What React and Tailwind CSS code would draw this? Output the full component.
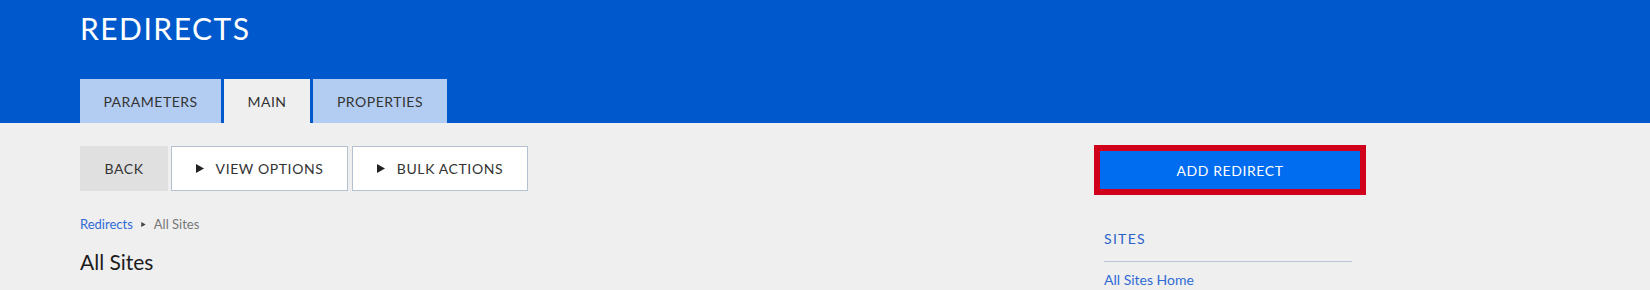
import React from "react";

const TABS = [
  { label: "PARAMETERS", width: "w-[141px]", active: false },
  { label: "MAIN", width: "w-[86px]", active: true },
  { label: "PROPERTIES", width: "w-[134px]", active: false },
];

function Caret({ className }) {
  return (
    <svg className={className} viewBox="0 0 8 9" aria-hidden="true">
      <polygon points="0,0 8,4.5 0,9" fill="currentColor" />
    </svg>
  );
}

function Header() {
  return (
    <header className="h-[123px] bg-[#0059cc] px-[80px]">
      <h1 className="pt-[13px] text-[30px] leading-none tracking-[1.5px] text-white">REDIRECTS</h1>
      <nav className="mt-[36px] flex gap-[3px]">
        {TABS.map((tab) => (
          <div
            key={tab.label}
            className={`${tab.width} flex h-[44px] items-center justify-center text-[14px] tracking-[0.5px] text-[#333] ${
              tab.active ? "bg-[#efefef]" : "bg-[#b3cdf2]"
            }`}
          >
            {tab.label}
          </div>
        ))}
      </nav>
    </header>
  );
}

function Toolbar() {
  return (
    <div className="flex h-[45px] gap-[3px]">
      <button className="w-[88px] bg-[#e0e0e0] text-[14px] tracking-[0.6px] text-[#333]">BACK</button>
      <button className="flex w-[177px] items-center justify-center gap-[12px] border border-[#b4c1d1] bg-white text-[14px] tracking-[0.6px] text-[#333]">
        <Caret className="h-[9px] w-[8px] text-[#222]" />
        VIEW OPTIONS
      </button>
      <button className="ml-[1px] flex w-[176px] items-center justify-center gap-[12px] border border-[#b4c1d1] bg-white text-[14px] tracking-[0.6px] text-[#333]">
        <Caret className="h-[9px] w-[8px] text-[#222]" />
        BULK ACTIONS
      </button>
    </div>
  );
}

export default function App() {
  return (
    <div className="min-h-[290px] bg-[#efefef] font-['Lato','Noto_Sans',sans-serif]">
      <Header />
      <main className="flex px-[80px]">
        <section className="w-[1014px] pt-[23px]">
          <Toolbar />
          <div className="mt-[23px] flex items-center text-[13px] leading-[20px]">
            <a className="text-[#2f6bd6]">Redirects</a>
            <Caret className="mx-[8px] h-[5px] w-[5px] text-[#444]" />
            <span className="text-[#777]">All Sites</span>
          </div>
          <h2 className="mt-[14px] text-[21px] leading-[28px] text-[#1c1c1c]">All Sites</h2>
        </section>
        <aside className="w-[272px] pt-[22px]">
          <button className="h-[50px] w-full border-[6px] border-[#d0021b] bg-[#006cf0] text-[14px] tracking-[0.6px] text-white">
            ADD REDIRECT
          </button>
          <div className="mt-[34px] pl-[10px] text-[14px] leading-[20px] tracking-[1.3px] text-[#2a63c9]">SITES</div>
          <div className="mx-[10px] mt-[12px] h-px w-[248px] bg-[#b8c6d8]" />
          <a className="mt-[7px] block pl-[10px] text-[14px] leading-[22px] text-[#2f6bd6]">All Sites Home</a>
        </aside>
      </main>
    </div>
  );
}
